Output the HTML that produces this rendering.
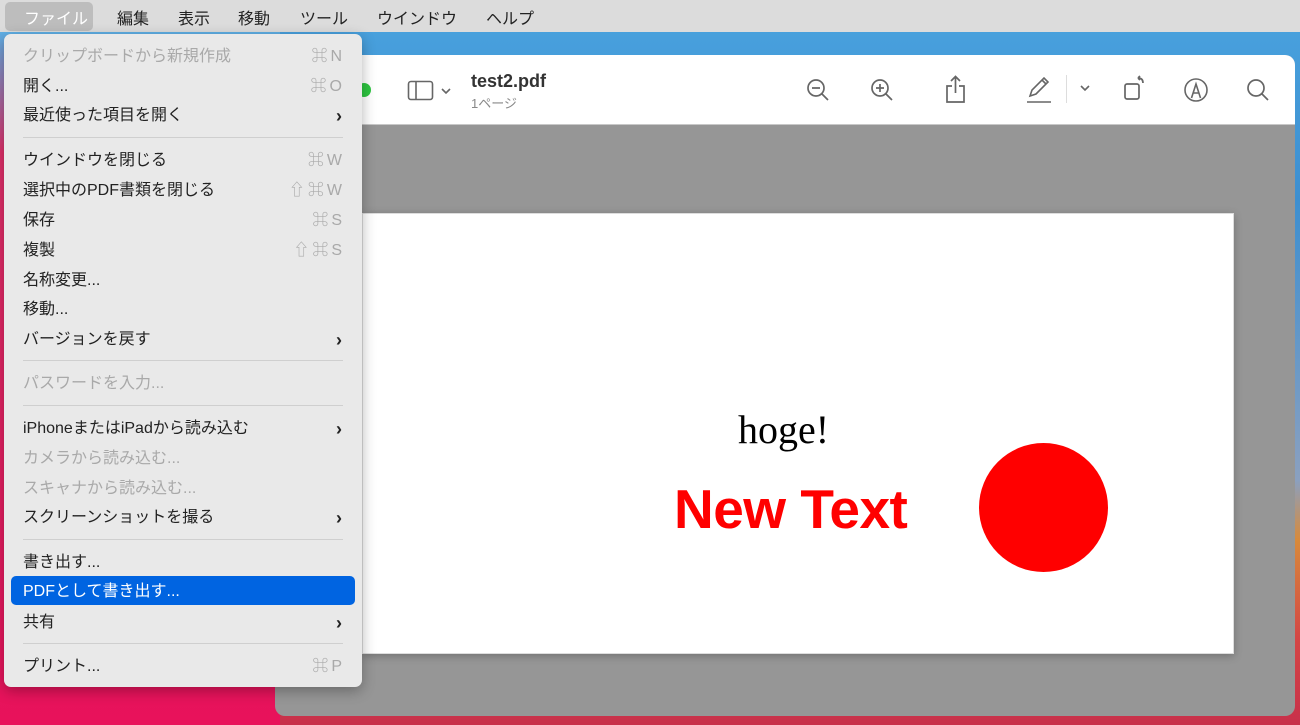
<!DOCTYPE html>
<html><head><meta charset="utf-8"><style>
*{margin:0;padding:0;box-sizing:border-box}
body{width:1300px;height:725px;overflow:hidden;position:relative;font-family:"Liberation Sans","Noto Sans CJK JP",sans-serif;
background:linear-gradient(180deg,#4aa3df 0px,#3d8fd0 200px,#8aa0c0 480px,#d88a3a 540px,#d44545 640px,#c8304a 725px);}
.lefbg{position:absolute;left:0;top:32px;width:280px;height:693px;background:linear-gradient(180deg,#5eb0e6 0,#e0306a 120px,#e8105a 725px)}
.bar{position:absolute;left:0;top:0;width:1300px;height:32px;background:#dcdcdc;font-size:16px;color:#222}
.bar span{position:absolute;top:5px}
.filesel{position:absolute;left:5px;top:2px;width:88px;height:29px;background:#bdbdbd;border-radius:5px}
.win{position:absolute;left:275px;top:55px;width:1020px;height:661px;background:#969696;border-radius:10px;overflow:hidden}
.tb{position:absolute;left:0;top:0;width:1020px;height:70px;background:#fff;border-bottom:1px solid #c8c8c8}
.page{position:absolute;left:87px;top:158px;width:872px;height:441px;background:#fff;box-shadow:0 2px 8px rgba(0,0,0,.25);border:1px solid #ddd}
.menu{position:absolute;left:4px;top:34px;width:358px;height:653px;background:#e9e9e9;border-radius:7px;box-shadow:0 4px 14px rgba(0,0,0,.3);font-size:16px;color:#222}
.it{position:absolute;left:19px;height:24px;line-height:24px;white-space:nowrap}
.dis{color:#a9a9a9}
.sc{position:absolute;right:20px;color:#a9a9a9;height:24px;line-height:24px;font-size:16px;letter-spacing:3px;margin-right:-3px}
.ar{position:absolute;right:20px;font-weight:bold;height:24px;line-height:24px;font-size:18px}
.sep{position:absolute;left:19px;width:320px;height:1px;background:#cfcfcf}
.hl{position:absolute;left:7px;top:542px;width:344px;height:29px;background:#0064e1;border-radius:5px}
svg{position:absolute}
</style></head><body>
<div class="lefbg"></div>
<div class="bar"><div class="filesel"></div>
<span style="left:24px;color:#fff">ファイル</span><span style="left:117px">編集</span><span style="left:178px">表示</span><span style="left:238px">移動</span><span style="left:300px">ツール</span><span style="left:377px">ウインドウ</span><span style="left:486px">ヘルプ</span></div>
<div class="win">
<div class="tb">
<div style="position:absolute;left:82px;top:28px;width:14px;height:14px;border-radius:50%;background:#2dc640"></div>
<svg style="left:132px;top:24px" width="48" height="24" viewBox="0 0 48 24"><rect x="1.5" y="2.5" width="24" height="18" rx="2.5" fill="none" stroke="#666" stroke-width="1.6"/><line x1="9" y1="3" x2="9" y2="20" stroke="#666" stroke-width="1.6"/><path d="M35 10l4 4 4-4" fill="none" stroke="#666" stroke-width="1.6"/></svg>
<div style="position:absolute;left:196px;top:16px;font-size:18px;font-weight:bold;color:#333">test2.pdf</div>
<div style="position:absolute;left:196px;top:38px;font-size:13px;color:#888">1ページ</div>
<svg style="left:530px;top:22px" width="26" height="26" viewBox="0 0 26 26" fill="none" stroke="#666" stroke-width="1.7"><circle cx="11" cy="11" r="8"/><path d="M17 17l6 6M7 11h8"/></svg>
<svg style="left:594px;top:22px" width="26" height="26" viewBox="0 0 26 26" fill="none" stroke="#666" stroke-width="1.7"><circle cx="11" cy="11" r="8"/><path d="M17 17l6 6M7 11h8M11 7v8"/></svg>
<svg style="left:668px;top:20px" width="26" height="30" viewBox="0 0 26 30" fill="none" stroke="#666" stroke-width="1.7"><path d="M9 11H4v16h17V11h-5M12.5 2v16M8 6l4.5-4.5L17 6"/></svg>
<svg style="left:750px;top:20px" width="28" height="30" viewBox="0 0 28 30" fill="none" stroke="#666" stroke-width="1.6"><path d="M5 21l2-6L19 3l4 4L11 19zM17 5l4 4"/><path d="M2 27h24"/></svg>
<div style="position:absolute;left:791px;top:20px;width:1px;height:28px;background:#ddd"></div>
<svg style="left:804px;top:28px" width="12" height="10" viewBox="0 0 12 10"><path d="M2 3l4 4 4-4" fill="none" stroke="#666" stroke-width="1.6"/></svg>
<svg style="left:846px;top:20px" width="28" height="28" viewBox="0 0 28 28" fill="none" stroke="#666" stroke-width="1.7"><rect x="4" y="9" width="14" height="15" rx="2"/><path d="M17 3q5 0 5 5M17 3l2-2M17 3l2 2"/></svg>
<svg style="left:908px;top:22px" width="26" height="26" viewBox="0 0 26 26" fill="none" stroke="#666" stroke-width="1.6"><circle cx="13" cy="13" r="11"/><path d="M8.5 21L13 7l4.5 14M10.5 16h5"/></svg>
<svg style="left:970px;top:22px" width="26" height="26" viewBox="0 0 26 26" fill="none" stroke="#666" stroke-width="1.7"><circle cx="11" cy="11" r="8"/><path d="M17 17l6 6"/></svg>
</div>
<div class="page">
<div style="position:absolute;left:375px;top:192px;font-family:'Liberation Serif',serif;font-size:40px;color:#000">hoge!</div>
<div style="position:absolute;left:311px;top:263px;font-weight:bold;font-size:55px;color:#ff0000;letter-spacing:-0.5px">New Text</div>
<div style="position:absolute;left:616px;top:229px;width:129px;height:129px;border-radius:50%;background:#ff0000"></div>
</div>
</div>
<div class="menu">
<div class="hl"></div>
<div class="it dis" style="top:11px">クリップボードから新規作成</div><div class="sc" style="top:11px">⌘N</div>
<div class="it" style="top:41px">開く...</div><div class="sc" style="top:41px">⌘O</div>
<div class="it" style="top:70px">最近使った項目を開く</div><div class="ar" style="top:70px">›</div>
<div class="sep" style="top:103px"></div>
<div class="it" style="top:115px">ウインドウを閉じる</div><div class="sc" style="top:115px">⌘W</div>
<div class="it" style="top:145px">選択中のPDF書類を閉じる</div><div class="sc" style="top:145px">⇧⌘W</div>
<div class="it" style="top:175px">保存</div><div class="sc" style="top:175px">⌘S</div>
<div class="it" style="top:205px">複製</div><div class="sc" style="top:205px">⇧⌘S</div>
<div class="it" style="top:235px">名称変更...</div>
<div class="it" style="top:264px">移動...</div>
<div class="it" style="top:294px">バージョンを戻す</div><div class="ar" style="top:294px">›</div>
<div class="sep" style="top:326px"></div>
<div class="it dis" style="top:338px">パスワードを入力...</div>
<div class="sep" style="top:371px"></div>
<div class="it" style="top:383px">iPhoneまたはiPadから読み込む</div><div class="ar" style="top:383px">›</div>
<div class="it dis" style="top:413px">カメラから読み込む...</div>
<div class="it dis" style="top:443px">スキャナから読み込む...</div>
<div class="it" style="top:472px">スクリーンショットを撮る</div><div class="ar" style="top:472px">›</div>
<div class="sep" style="top:505px"></div>
<div class="it" style="top:517px">書き出す...</div>
<div class="it" style="top:546px;color:#fff">PDFとして書き出す...</div>
<div class="it" style="top:577px">共有</div><div class="ar" style="top:577px">›</div>
<div class="sep" style="top:609px"></div>
<div class="it" style="top:621px">プリント...</div><div class="sc" style="top:621px">⌘P</div>
</div>
</body></html>
